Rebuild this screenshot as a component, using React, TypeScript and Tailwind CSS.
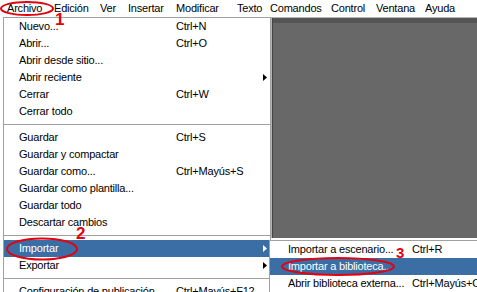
type Item =
  | { sep: true }
  | { label: string; shortcut?: string; sub?: boolean; active?: boolean };

const menuBar = [
  { label: 'Archivo', w: 'w-[47px]' },
  { label: 'Edición', w: 'w-[46px]' },
  { label: 'Ver', w: 'w-[28px]' },
  { label: 'Insertar', w: 'w-[48px]' },
  { label: 'Modificar', w: 'w-[61px]' },
  { label: 'Texto', w: 'w-[33px]' },
  { label: 'Comandos', w: 'w-[61px]' },
  { label: 'Control', w: 'w-[45px]' },
  { label: 'Ventana', w: 'w-[49px]' },
  { label: 'Ayuda', w: 'w-[45px]' },
];

const fileMenu: Item[] = [
  { label: 'Nuevo...', shortcut: 'Ctrl+N' },
  { label: 'Abrir...', shortcut: 'Ctrl+O' },
  { label: 'Abrir desde sitio...' },
  { label: 'Abrir reciente', sub: true },
  { label: 'Cerrar', shortcut: 'Ctrl+W' },
  { label: 'Cerrar todo' },
  { sep: true },
  { label: 'Guardar', shortcut: 'Ctrl+S' },
  { label: 'Guardar y compactar' },
  { label: 'Guardar como...', shortcut: 'Ctrl+Mayús+S' },
  { label: 'Guardar como plantilla...' },
  { label: 'Guardar todo' },
  { label: 'Descartar cambios' },
  { sep: true },
  { label: 'Importar', sub: true, active: true },
  { label: 'Exportar', sub: true },
  { sep: true },
  { label: 'Configuración de publicación...', shortcut: 'Ctrl+Mayús+F12' },
];

const importMenu: Item[] = [
  { label: 'Importar a escenario...', shortcut: 'Ctrl+R' },
  { label: 'Importar a biblioteca...', active: true },
  { label: 'Abrir biblioteca externa...', shortcut: 'Ctrl+Mayús+O' },
];

function Arrow({ white }: { white?: boolean }) {
  return (
    <svg width="4" height="7" viewBox="0 0 4 7" className="absolute right-[3px] top-[5px]">
      <path d="M0 0 L4 3.5 L0 7 Z" fill={white ? '#ffffff' : '#000000'} />
    </svg>
  );
}

function MenuRows({ items, labelW, padL }: { items: Item[]; labelW: string; padL: string }) {
  return (
    <>
      {items.map((it, i) =>
        'sep' in it ? (
          <div key={i} className="flex h-[9px] items-center">
            <div className="h-px w-full bg-[#a0a0a0]" />
          </div>
        ) : (
          <div
            key={i}
            className={`relative flex h-[17px] items-center whitespace-nowrap ${
              it.active ? 'bg-[#3b6ea5] text-white' : ''
            }`}
          >
            <span className={`${labelW} ${padL} shrink-0`}>{it.label}</span>
            {it.shortcut && <span>{it.shortcut}</span>}
            {it.sub && <Arrow white={it.active} />}
          </div>
        )
      )}
    </>
  );
}

export default function App() {
  return (
    <div className="relative h-[292px] w-[477px] overflow-hidden bg-white font-['Liberation_Sans',Arial,sans-serif] text-[11px] tracking-[-0.2px] text-black">
      {/* menu bar */}
      <div className="flex h-[17px] items-center pl-[7px]">
        {menuBar.map((m) => (
          <span key={m.label} className={`${m.w} shrink-0 whitespace-nowrap`}>
            {m.label}
          </span>
        ))}
      </div>

      {/* workspace */}
      <div className="flex">
        <div className="w-[271px] shrink-0" />
        <div className="flex h-[221px] flex-1 flex-col border-l border-t border-[#b4b4b4]">
          <div className="h-[5px] border-l border-[#444] bg-[#555555]" />
          <div className="flex-1 border-l border-[#444] bg-[#686868]" />
        </div>
      </div>

      {/* Archivo menu */}
      <div className="absolute left-[3px] top-[17px] w-[268px] border border-[#a0a0a0] bg-white">
        <MenuRows items={fileMenu} labelW="w-[172px]" padL="pl-[15px]" />
      </div>

      {/* Importar submenu */}
      <div className="absolute left-[269px] top-[240px] w-[230px] border border-[#a0a0a0] bg-white">
        <MenuRows items={importMenu} labelW="w-[142px]" padL="pl-[18px]" />
      </div>

      {/* annotations */}
      <svg className="pointer-events-none absolute left-0 top-0" width="477" height="292">
        <ellipse cx="27" cy="8.5" rx="26" ry="6.5" fill="none" stroke="#e3000f" strokeWidth="2" />
        <ellipse cx="42" cy="249" rx="35" ry="10.5" fill="none" stroke="#e3000f" strokeWidth="2" />
        <ellipse cx="338" cy="266.5" rx="56" ry="8.5" fill="none" stroke="#e3000f" strokeWidth="2" />
      </svg>
      <span className="absolute left-[55px] top-[11px] text-[17px] font-bold leading-none tracking-normal text-[#e3000f]">1</span>
      <span className="absolute left-[76px] top-[225px] text-[17px] font-bold leading-none tracking-normal text-[#e3000f]">2</span>
      <span className="absolute left-[396px] top-[245px] text-[15px] font-bold leading-none tracking-normal text-[#e3000f]">3</span>
    </div>
  );
}
